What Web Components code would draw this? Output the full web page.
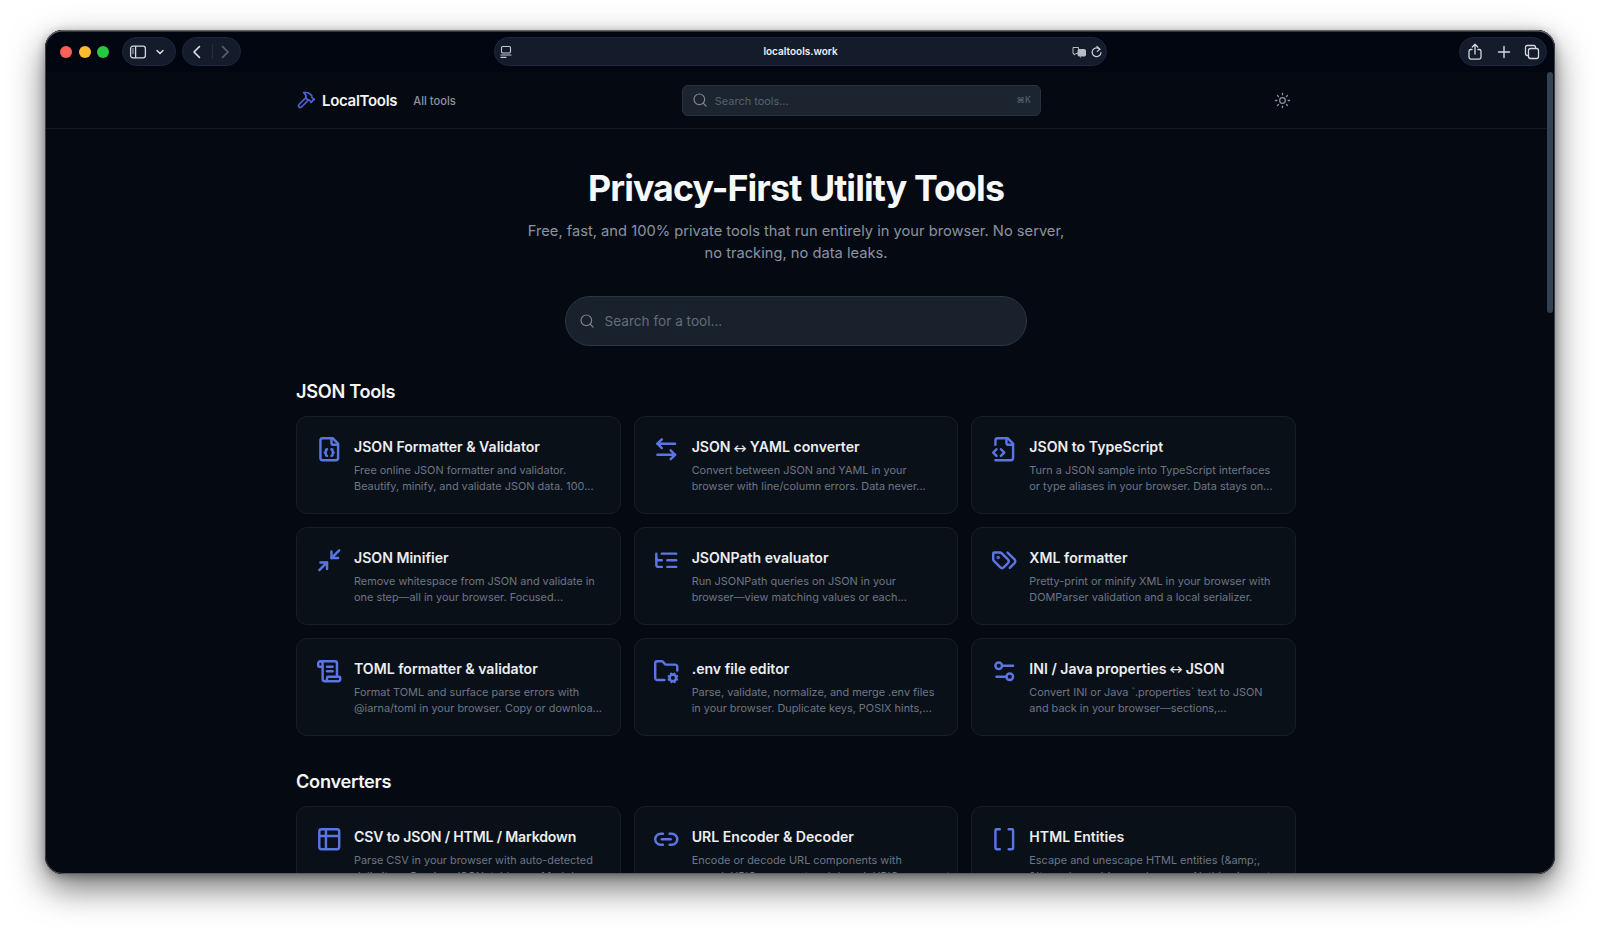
<!DOCTYPE html>
<html lang="en">
<head>
<meta charset="utf-8">
<title>LocalTools</title>
<style>
html,body{margin:0;height:100%;background:#fff;overflow:hidden}
body{font-family:Inter,"Liberation Sans",sans-serif}
.arr{font-size:10.5px;font-weight:700;vertical-align:.5px;margin:0 -1px}
.tight{letter-spacing:-.17px}
</style>
</head>
<body>
<lt-window>
  <lt-toolbar slot="toolbar"></lt-toolbar>
  <lt-header></lt-header>
  <lt-hero></lt-hero>
  <lt-section heading="JSON Tools">
    <lt-card icon="filejson"><span slot="title">JSON Formatter &amp; Validator</span>Free online JSON formatter and validator.<br>Beautify, minify, and validate JSON data. 100...</lt-card>
    <lt-card icon="swap"><span slot="title">JSON <span class="arr">↔</span> YAML converter</span>Convert between JSON and YAML in your<br>browser with line/column errors. Data never...</lt-card>
    <lt-card icon="filecode"><span slot="title">JSON to TypeScript</span>Turn a JSON sample into TypeScript interfaces<br>or type aliases in your browser. Data stays on...</lt-card>
    <lt-card icon="minimize"><span slot="title">JSON Minifier</span>Remove whitespace from JSON and validate in<br>one step—all in your browser. Focused...</lt-card>
    <lt-card icon="listtree"><span slot="title">JSONPath evaluator</span>Run JSONPath queries on JSON in your<br>browser—view matching values or each...</lt-card>
    <lt-card icon="tags"><span slot="title">XML formatter</span>Pretty-print or minify XML in your browser with<br>DOMParser validation and a local serializer.</lt-card>
    <lt-card icon="scroll"><span slot="title">TOML formatter &amp; validator</span>Format TOML and surface parse errors with<br>@iarna/toml in your browser. Copy or downloa...</lt-card>
    <lt-card icon="foldercog"><span slot="title">.env file editor</span>Parse, validate, normalize, and merge .env files<br>in your browser. Duplicate keys, POSIX hints,...</lt-card>
    <lt-card icon="settings"><span slot="title">INI / Java properties <span class="arr">↔</span> JSON</span>Convert INI or Java `.properties` text to JSON<br>and back in your browser—sections,...</lt-card>
  </lt-section>
  <lt-section heading="Converters">
    <lt-card icon="table"><span slot="title" class="tight">CSV to JSON / HTML / Markdown</span>Parse CSV in your browser with auto-detected<br>delimiters. Preview JSON, tables, or Markdown...</lt-card>
    <lt-card icon="link"><span slot="title">URL Encoder &amp; Decoder</span>Encode or decode URL components with<br>encodeURIComponent and decodeURIComponent...</lt-card>
    <lt-card icon="brackets"><span slot="title">HTML Entities</span>Escape and unescape HTML entities (&amp;amp;,<br>&amp;lt;, and more) in your browser. Nothing is sent...</lt-card>
  </lt-section>
</lt-window>
<script>
const ICONS={
hammer:'<path d="m15 12-8.373 8.373a1 1 0 1 1-3-3L12 9"/><path d="m18 15 4-4"/><path d="m21.5 11.5-1.914-1.914A2 2 0 0 1 19 8.172V7l-2.26-2.26a6 6 0 0 0-4.202-1.756L9 2.96l.92.82A6.18 6.18 0 0 1 12 8.4V10l2 2h1.172a2 2 0 0 1 1.414.586L18.5 14.5"/>',
filejson:'<path d="M15 2H6a2 2 0 0 0-2 2v16a2 2 0 0 0 2 2h12a2 2 0 0 0 2-2V7Z"/><path d="M14 2v4a2 2 0 0 0 2 2h4"/><path d="M10 12a1 1 0 0 0-1 1v1a1 1 0 0 1-1 1 1 1 0 0 1 1 1v1a1 1 0 0 0 1 1"/><path d="M14 18a1 1 0 0 0 1-1v-1a1 1 0 0 1 1-1 1 1 0 0 1-1-1v-1a1 1 0 0 0-1-1"/>',
swap:'<path d="M8 3 4 7l4 4"/><path d="M4 7h16"/><path d="m16 21 4-4-4-4"/><path d="M20 17H4"/>',
filecode:'<path d="M4 22h14a2 2 0 0 0 2-2V7l-5-5H6a2 2 0 0 0-2 2v4"/><path d="M14 2v4a2 2 0 0 0 2 2h4"/><path d="m5 12-3 3 3 3"/><path d="m9 18 3-3-3-3"/>',
minimize:'<path d="M4 14h6v6"/><path d="M20 10h-6V4"/><path d="m14 10 7-7"/><path d="m3 21 7-7"/>',
listtree:'<path d="M21 12h-8"/><path d="M21 6H8"/><path d="M21 18h-8"/><path d="M3 6v4c0 1.1.9 2 2 2h3"/><path d="M3 10v6c0 1.1.9 2 2 2h3"/>',
tags:'<path d="m15 5 6.3 6.3a2.4 2.4 0 0 1 0 3.4L17 19"/><path d="M9.586 5.586A2 2 0 0 0 8.172 5H3a1 1 0 0 0-1 1v5.172a2 2 0 0 0 .586 1.414L8.29 18.29a2.426 2.426 0 0 0 3.42 0l3.58-3.58a2.426 2.426 0 0 0 0-3.42z"/><circle cx="6.5" cy="9.5" r=".5" fill="currentColor"/>',
scroll:'<path d="M15 12h-5"/><path d="M15 8h-5"/><path d="M19 17V5a2 2 0 0 0-2-2H4"/><path d="M8 21h12a2 2 0 0 0 2-2v-1a1 1 0 0 0-1-1H11a1 1 0 0 0-1 1v1a2 2 0 1 1-4 0V5a2 2 0 1 0-4 0v2a1 1 0 0 0 1 1h3"/>',
foldercog:'<circle cx="18" cy="18" r="3"/><path d="M10.3 20H4a2 2 0 0 1-2-2V5a2 2 0 0 1 2-2h3.9a2 2 0 0 1 1.69.9l.81 1.2a2 2 0 0 0 1.67.9H20a2 2 0 0 1 2 2v3.3"/><path d="m21.7 19.4-.9-.3"/><path d="m15.2 16.9-.9-.3"/><path d="m16.6 21.7.3-.9"/><path d="m19.1 15.2.3-.9"/><path d="m19.6 21.7-.4-1"/><path d="m16.8 15.3-.4-1"/><path d="m14.3 19.6 1-.4"/><path d="m20.7 16.8 1-.4"/>',
settings:'<path d="M20 7h-9"/><path d="M14 17H5"/><circle cx="17" cy="17" r="3"/><circle cx="7" cy="7" r="3"/>',
table:'<path d="M9 3H5a2 2 0 0 0-2 2v4m6-6h10a2 2 0 0 1 2 2v4M9 3v18m0 0h10a2 2 0 0 0 2-2V9M9 21H5a2 2 0 0 1-2-2V9m0 0h18"/>',
link:'<path d="M9 17H7A5 5 0 0 1 7 7h2"/><path d="M15 7h2a5 5 0 1 1 0 10h-2"/><line x1="8" x2="16" y1="12" y2="12"/>',
brackets:'<path d="M16 3h3a1 1 0 0 1 1 1v16a1 1 0 0 1-1 1h-3"/><path d="M8 21H5a1 1 0 0 1-1-1V4a1 1 0 0 1 1-1h3"/>',
search:'<path d="m21 21-4.34-4.34"/><circle cx="11" cy="11" r="8"/>',
sun:'<circle cx="12" cy="12" r="4"/><path d="M12 2v2"/><path d="M12 20v2"/><path d="m4.93 4.93 1.41 1.41"/><path d="m17.66 17.66 1.41 1.41"/><path d="M2 12h2"/><path d="M20 12h2"/><path d="m6.34 17.66-1.41 1.41"/><path d="m19.07 4.93-1.41 1.41"/>'
};
const svg=(n,s,w=2)=>`<svg xmlns="http://www.w3.org/2000/svg" width="${s}" height="${s}" viewBox="0 0 24 24" fill="none" stroke="currentColor" stroke-width="${w}" stroke-linecap="round" stroke-linejoin="round">${ICONS[n]}</svg>`;
class Base extends HTMLElement{
  constructor(){super();this.attachShadow({mode:'open'}).innerHTML=this.markup();}
  markup(){return '';}
}
customElements.define('lt-window',class extends Base{markup(){return `<style>
:host{display:block;box-sizing:border-box;width:1510px;height:844px;margin:30px 0 0 45px;border-radius:18px;overflow:hidden;background:#050a12;position:relative;box-shadow:0 14px 34px rgba(0,0,0,.55),0 2px 10px rgba(0,0,0,.3)}
.frame{position:absolute;inset:0;border-radius:18px;pointer-events:none;box-shadow:inset 0 1.5px 0 #63666c,inset 1px 0 0 #3c3f47,inset -1px 0 0 #3c3f47,inset 0 -1px 0 #5a5d66}
.body{display:flex;height:802px}
.page{flex:1;min-width:0;overflow:hidden;background:#050a12}
.rail{width:8px;background:#050a12;flex:none}
.thumb{width:6px;height:241px;background:#334150;border-radius:3px}
</style><slot name="toolbar"></slot><div class="body"><div class="page"><slot></slot></div><div class="rail"><div class="thumb"></div></div></div><div class="frame"></div>`}});
customElements.define('lt-toolbar',class extends Base{markup(){return `<style>
:host{display:flex;align-items:flex-start;box-sizing:border-box;height:42px;padding:7px 8px 6px 15px;background:#020610;color:#d5d9df}
.lights{display:flex;gap:6.5px;height:29px;align-items:center}
.lights i{width:12px;height:12px;border-radius:50%;display:block}
.pill{display:flex;align-items:center;height:29px;box-sizing:border-box;background:#141c2b;border:1px solid #1b2840;border-radius:15px}
.side{width:54px;margin-left:13px;padding-left:6px;gap:8px}
.nav{width:59px;margin-left:6px;padding-left:9px}
.sep{width:1px;height:15px;background:#262f3e;margin:0 7px 0 10px}
.url{width:613px;margin-left:253px;padding:0 3px 0 5px;position:relative;justify-content:space-between}
.url b{position:absolute;left:0;right:0;text-align:center;font:600 10px/27px Inter,"Liberation Sans",sans-serif;color:#eef0f3}
.urlr{display:flex;gap:3px;align-items:center}
.tools{width:88px;margin-left:auto;padding:0 6px 0 7px;justify-content:space-between}
svg{display:block;flex:none}
</style>
<div class="lights"><i style="background:#fe5f57"></i><i style="background:#febc2e"></i><i style="background:#28c840"></i></div>
<div class="pill side">
<svg width="18" height="14" viewBox="0 0 18 14" fill="none" stroke="currentColor" stroke-width="1.3"><rect x="1.6" y="1.2" width="14.8" height="11.6" rx="2.4"/><path d="M6.6 1.2v11.6"/><path d="M3.2 4h1.6M3.2 6h1.6M3.2 8h1.6" stroke-width="1"/></svg>
<svg width="10" height="8" viewBox="0 0 10 8" fill="none" stroke="currentColor" stroke-width="1.6" stroke-linecap="round" stroke-linejoin="round"><path d="M2 2.5 5 5.5 8 2.5"/></svg>
</div>
<div class="pill nav">
<svg width="10" height="14" viewBox="0 0 10 14" fill="none" stroke="#e2e5ea" stroke-width="1.6" stroke-linecap="round" stroke-linejoin="round"><path d="M7.5 1.5 2 7l5.5 5.5"/></svg>
<div class="sep"></div>
<svg width="10" height="14" viewBox="0 0 10 14" fill="none" stroke="#5b6473" stroke-width="1.6" stroke-linecap="round" stroke-linejoin="round"><path d="M2.5 1.5 8 7l-5.5 5.5"/></svg>
</div>
<div class="pill url">
<svg width="12" height="14" viewBox="0 0 12 14" fill="none" stroke="#c8ccd3" stroke-width="1.1" stroke-linecap="round"><rect x="1.5" y="1.5" width="9" height="6.5" rx="1.2"/><path d="M1 10h10M1 12.4h5"/></svg>
<b>localtools.work</b>
<div class="urlr">
<svg width="16" height="14" viewBox="0 0 16 14" fill="none" stroke="#b8bdc5" stroke-width="1"><path d="M2 2.5h5.5v6H5L3 10V8.5H2z"/><rect x="7" y="4.5" width="7.5" height="6.5" rx="1" fill="#b8bdc5"/><path d="M9 12h1"/></svg>
<svg width="13" height="14" viewBox="0 0 13 14" fill="none" stroke="#c8ccd3" stroke-width="1.2" stroke-linecap="round" stroke-linejoin="round"><path d="M9.8 4.2A4.4 4.4 0 1 0 11 7.5"/><path d="M7 1.5 9.9 4.2 7.2 6.4"/></svg>
</div>
</div>
<div class="pill tools">
<svg width="16" height="18" viewBox="0 0 16 18" fill="none" stroke="#d5d9df" stroke-width="1.3" stroke-linecap="round" stroke-linejoin="round"><path d="M5 6.5H3.8A1.8 1.8 0 0 0 2 8.3v6a1.8 1.8 0 0 0 1.8 1.8h8.4a1.8 1.8 0 0 0 1.8-1.8v-6a1.8 1.8 0 0 0-1.8-1.8H11"/><path d="M8 11V1.5M5.3 4 8 1.3 10.7 4"/></svg>
<svg width="14" height="14" viewBox="0 0 14 14" fill="none" stroke="#d5d9df" stroke-width="1.4" stroke-linecap="round"><path d="M7 1.5v11M1.5 7h11"/></svg>
<svg width="16" height="16" viewBox="0 0 16 16" fill="none" stroke="#d5d9df" stroke-width="1.3"><path d="M4 11.5H3.2A1.7 1.7 0 0 1 1.5 9.8V3.2A1.7 1.7 0 0 1 3.2 1.5h6.6A1.7 1.7 0 0 1 11.5 3.2V4"/><rect x="4.5" y="4.5" width="10" height="10" rx="2"/></svg>
</div>`}});
customElements.define('lt-header',class extends Base{markup(){return `<style>
:host{display:block;box-sizing:border-box;height:57px;border-bottom:1px solid #151b26}
.in{width:1000px;height:56px;margin:0 auto;display:flex;align-items:center;color:#7c8594}
.logo{display:flex;align-items:center;gap:6px;margin-top:2px;color:#f4f5f7;font:600 15px/20px Inter,"Liberation Sans",sans-serif;letter-spacing:-.3px}
.logo svg{color:#4f63d9;margin-top:-2px}
.all{margin:2px 0 0 16px;font:500 11.2px/16px Inter,"Liberation Sans",sans-serif;color:#8a93a1}
.search{display:flex;align-items:center;width:359px;height:31px;box-sizing:border-box;margin-left:226px;padding:0 9px;background:#1b242f;border:1px solid #293340;border-radius:6px;font:400 10.95px/16px Inter,"Liberation Sans",sans-serif;color:#566170}
.search svg{margin-right:7px;color:#7a8594}
.search span{margin-top:1px}
.search kbd{margin-left:auto;font:500 8.5px/12px Inter,"Liberation Sans",sans-serif;color:#566170}
.sun{margin-left:auto;margin-right:5px;color:#8a93a1;display:flex}
svg{display:block}
</style><div class="in">
<div class="logo">${svg('hammer',20,2)}<span>LocalTools</span></div>
<div class="all">All tools</div>
<div class="search">${svg('search',16,1.8)}<span>Search tools...</span><kbd>⌘K</kbd></div>
<div class="sun">${svg('sun',17,1.8)}</div>
</div>`}});
customElements.define('lt-hero',class extends Base{markup(){return `<style>
:host{display:block;padding:37px 0 .5px;text-align:center}
h1{margin:0;font:700 35.75px/44px Inter,"Liberation Sans",sans-serif;letter-spacing:-.9px;color:#f7f8f9}
p{margin:9.5px 0 0;font:400 14.7px/22.5px Inter,"Liberation Sans",sans-serif;color:#8a93a1}
.s{display:flex;align-items:center;width:462px;height:49.5px;box-sizing:border-box;margin:31.5px auto 0;padding:0 12.5px;background:#18212c;border:1px solid #2a3644;border-radius:25px;font:400 13.6px/20px Inter,"Liberation Sans",sans-serif;color:#626d7c;text-align:left;gap:10px}
.s svg{color:#7a8594;display:block}
</style><h1>Privacy-First Utility Tools</h1>
<p>Free, fast, and 100% private tools that run entirely in your browser. No server,<br>no tracking, no data leaks.</p>
<div class="s">${svg('search',16,1.8)}<span>Search for a tool...</span></div>`}});
customElements.define('lt-section',class extends Base{markup(){return `<style>
:host{display:block;width:1000px;margin:32px auto 0}
h2{margin:0 0 12px;font:600 18.2px/26px Inter,"Liberation Sans",sans-serif;letter-spacing:-.3px;color:#f4f5f7}
.g{display:grid;grid-template-columns:repeat(3,minmax(0,1fr));gap:12.9px 13px}
</style><h2>${this.getAttribute('heading')}</h2><div class="g"><slot></slot></div>`}});
customElements.define('lt-card',class extends Base{markup(){return `<style>
:host{display:flex;box-sizing:border-box;height:98px;padding:20px 10px 20px 18.5px;background:#0a1018;border:1px solid #171e29;border-radius:11px;gap:12px}
.i{flex:none;width:26.5px;height:26.5px;margin-top:-1px;color:#5b75e4}
svg{display:block}
.t{height:20px;font:600 14.1px/20px Inter,"Liberation Sans",sans-serif;color:#eceef1;white-space:nowrap}
.d{margin-top:5px;font:400 10.9px/16px Inter,"Liberation Sans",sans-serif;color:#6c7686;white-space:nowrap}
</style><div class="i">${svg(this.getAttribute('icon'),26.5,2.2)}</div><div><div class="t"><slot name="title"></slot></div><div class="d"><slot></slot></div></div>`}});
</script>
</body>
</html>
